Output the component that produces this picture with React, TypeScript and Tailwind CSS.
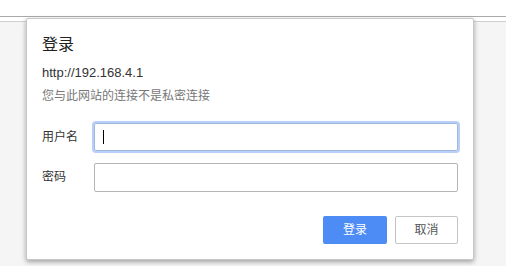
import React from "react";

export default function App() {
  const font = { fontFamily: '"Liberation Sans","Noto Sans CJK SC",sans-serif' };
  return (
    <div className="relative w-[506px] h-[266px] overflow-hidden bg-[#f5f5f5]" style={font}>
      <div className="h-[16px] bg-white" />
      <div className="h-[5px] bg-white border-t border-[#aaaaaa]" />
      <div className="border-t border-[#cfcfcf]" />
      <div className="absolute left-[26px] top-[18px] w-[448px] h-[242px] bg-white rounded-[2px] border border-[#c8c8c8] shadow-[0_2px_5px_rgba(0,0,0,0.35)] px-[15px] flex flex-col">
        <div className="mt-[16px] h-[20px] leading-[20px] text-[16px] text-[#222]">登录</div>
        <div className="mt-[10px] h-[16px] leading-[16px] text-[13px] text-[#333]">http://192.168.4.1</div>
        <div className="mt-[7px] h-[16px] leading-[16px] text-[12px] text-[#777]">您与此网站的连接不是私密连接</div>
        <div className="mt-[18px] flex items-center h-[30px]">
          <div className="w-[52px] text-[12px] text-[#333]">用户名</div>
          <div className="flex-1 h-[28px] border border-[#9fb6dd] rounded-[2px] shadow-[0_0_0_2px_#b7cff9] flex items-center pl-[8px]">
            <div className="w-px h-[14px] bg-black" />
          </div>
        </div>
        <div className="mt-[10px] flex items-center h-[30px]">
          <div className="w-[52px] text-[12px] text-[#333]">密码</div>
          <div className="flex-1 h-[29px] border border-[#b5b5b5] rounded-[2px]" />
        </div>
        <div className="mt-auto mb-[15px] flex justify-end gap-[8px]">
          <button className="w-[64px] h-[28px] rounded-[2px] bg-[#4d8cf4] text-white text-[12px]">登录</button>
          <button className="w-[63px] h-[28px] rounded-[2px] border border-[#c4c4c4] bg-white text-[#555] text-[12px]">取消</button>
        </div>
      </div>
    </div>
  );
}
